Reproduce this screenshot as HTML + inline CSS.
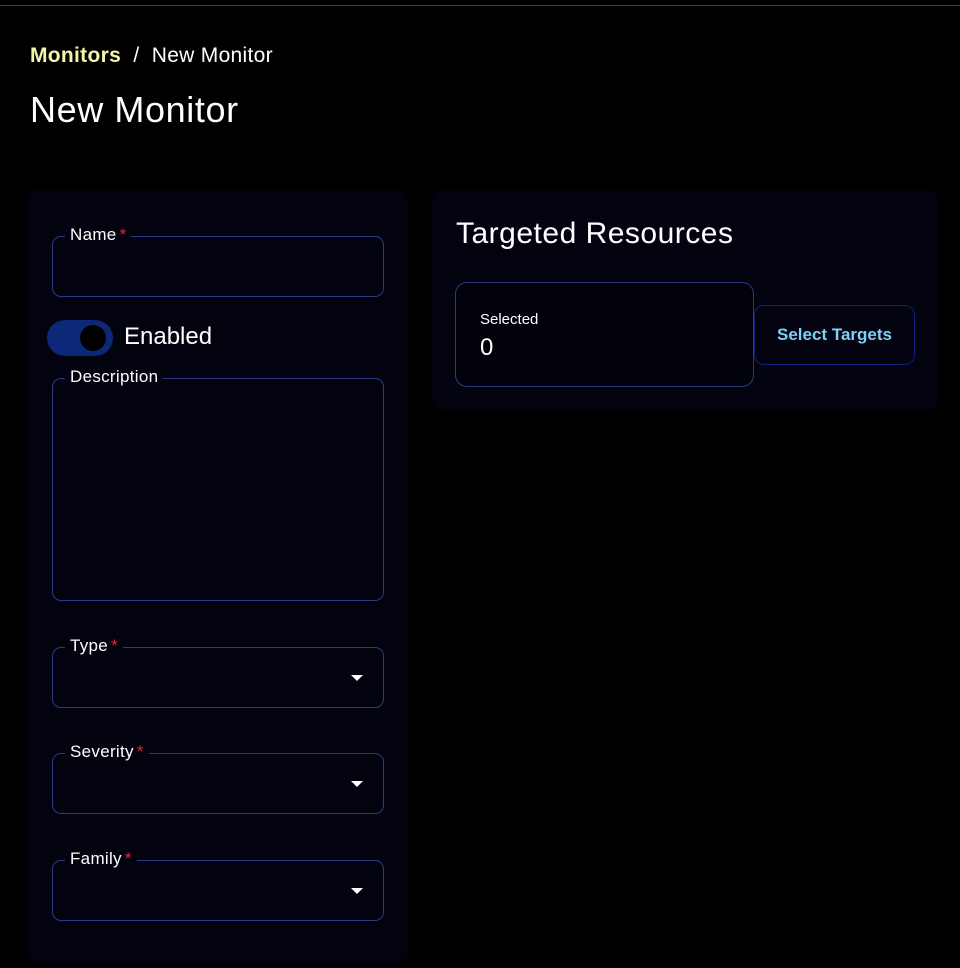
<!DOCTYPE html>
<html><head><style>
*{box-sizing:border-box;margin:0;padding:0}
body{width:960px;height:968px;background:#000;font-family:"Liberation Sans",sans-serif;color:#fff;position:relative;overflow:hidden}
.top{position:absolute;left:0;top:5px;width:960px;height:1px;background:#3c3c5a}
.crumb{position:absolute;left:30px;top:44px;font-size:21px;letter-spacing:0.3px}
.crumb b{color:#f3f5a8}
h1{position:absolute;left:30px;top:89px;font-size:36px;font-weight:normal;letter-spacing:0.6px}
.panel{position:absolute;background:#03030f;border-radius:10px}
.f{position:absolute;left:24px;width:332px;border:1px solid #2c3a86;border-radius:9px}
.lbl{position:absolute;left:12px;top:-12px;background:#03030f;padding:0 5px;font-size:17px;letter-spacing:0.3px}
.lbl i{color:#e5243b;font-style:normal;margin-left:3px}
.arr{position:absolute;right:20px;top:27px;width:0;height:0;border-left:6px solid transparent;border-right:6px solid transparent;border-top:6px solid #fff}
</style></head><body>
<div class="top"></div>
<div class="crumb"><b>Monitors</b>&nbsp;&nbsp;/&nbsp;&nbsp;New Monitor</div>
<h1>New Monitor</h1>
<div class="panel" style="left:28px;top:190px;width:380px;height:773px">
 <div class="f" style="top:46px;height:61px"><span class="lbl">Name<i>*</i></span></div>
 <div style="position:absolute;left:19px;top:130px;width:66px;height:36px;border-radius:18px;background:#0d2878"><div style="position:absolute;left:33px;top:5px;width:26px;height:26px;border-radius:50%;background:#000"></div></div>
 <div style="position:absolute;left:96px;top:133px;font-size:24px">Enabled</div>
 <div class="f" style="top:188px;height:223px"><span class="lbl">Description</span></div>
 <div class="f" style="top:457px;height:61px"><span class="lbl">Type<i>*</i></span><div class="arr"></div></div>
 <div class="f" style="top:563px;height:61px"><span class="lbl">Severity<i>*</i></span><div class="arr"></div></div>
 <div class="f" style="top:670px;height:61px"><span class="lbl">Family<i>*</i></span><div class="arr"></div></div>
</div>
<div class="panel" style="left:432px;top:190px;width:506px;height:220px">
 <div style="position:absolute;left:24px;top:27px;font-size:30px;letter-spacing:0.5px">Targeted Resources</div>
 <div style="position:absolute;left:23px;top:92px;width:299px;height:105px;border:1px solid #2c3a86;border-radius:12px;background:#01010a">
  <div style="position:absolute;left:24px;top:28px;font-size:15px">Selected</div>
  <div style="position:absolute;left:24px;top:51px;font-size:24px">0</div>
 </div>
 <div style="position:absolute;left:322px;top:115px;width:161px;height:60px;border:1px solid #0e1e80;border-radius:10px;color:#7fd0f5;font-weight:bold;font-size:17px;text-align:center;line-height:58px">Select Targets</div>
</div>
</body></html>
